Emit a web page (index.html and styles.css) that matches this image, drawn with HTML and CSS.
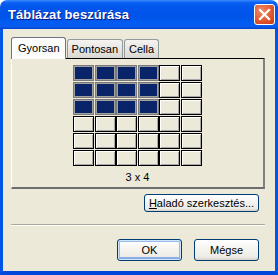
FILE: index.html
```html
<!DOCTYPE html>
<html>
<head>
<meta charset="utf-8">
<link rel="stylesheet" href="styles.css">
</head>
<body>
<div class="window">
  <div class="titlebar">
    <span class="title">Táblázat beszúrása</span>
    <button class="close" aria-label="Bezárás">
      <svg width="13" height="13" viewBox="0 0 13 13"><path d="M2 2 L11 11 M11 2 L2 11" stroke="#fff" stroke-width="2.2" stroke-linecap="square"/></svg>
    </button>
  </div>
  <div class="client">
    <div class="tabs">
      <div class="tab active">Gyorsan</div>
      <div class="tab">Pontosan</div>
      <div class="tab">Cella</div>
    </div>
    <div class="panel">
      <div class="grid">
        <div class="cell on"></div><div class="cell on"></div><div class="cell on"></div><div class="cell on"></div><div class="cell"></div><div class="cell"></div>
        <div class="cell on"></div><div class="cell on"></div><div class="cell on"></div><div class="cell on"></div><div class="cell"></div><div class="cell"></div>
        <div class="cell on"></div><div class="cell on"></div><div class="cell on"></div><div class="cell on"></div><div class="cell"></div><div class="cell"></div>
        <div class="cell"></div><div class="cell"></div><div class="cell"></div><div class="cell"></div><div class="cell"></div><div class="cell"></div>
        <div class="cell"></div><div class="cell"></div><div class="cell"></div><div class="cell"></div><div class="cell"></div><div class="cell"></div>
        <div class="cell"></div><div class="cell"></div><div class="cell"></div><div class="cell"></div><div class="cell"></div><div class="cell"></div>
      </div>
      <div class="size">3 x 4</div>
    </div>
    <div class="adv-row">
      <button class="btn adv"><u>H</u>aladó szerkesztés...</button>
    </div>
    <div class="sep"></div>
    <div class="actions">
      <button class="btn default">OK</button>
      <button class="btn">Mégse</button>
    </div>
  </div>
</div>
</body>
</html>
```
FILE: styles.css
```css
* { box-sizing: border-box; }
html, body { margin: 0; padding: 0; background: #fff; }
body { font-family: "Liberation Sans", Arial, sans-serif; font-size: 11px; color: #000; }

.window {
  width: 278px;
  height: 275px;
  display: flex;
  flex-direction: column;
}

.titlebar {
  height: 29px;
  flex: none;
  display: flex;
  align-items: center;
  justify-content: space-between;
  padding: 0 3px 1px 8px;
  border-radius: 7px 7px 0 0;
  background: linear-gradient(to bottom, #3A8CFF 0%, #0B61F2 9%, #0256EB 25%, #0054E8 55%, #015CF2 80%, #0A5AEA 92%, #0041CF 100%);
}
.title {
  color: #fff;
  font-family: "Liberation Sans", Arial, sans-serif;
  font-weight: bold;
  font-size: 13px;
  text-shadow: 1px 1px 0 #0A1883;
  letter-spacing: 0.1px;
  margin-top: 1px;
}
.close {
  width: 21px;
  height: 21px;
  padding: 0;
  margin: 0;
  border: 1px solid #fff;
  border-radius: 3px;
  background: radial-gradient(circle at 35% 30%, #F08A6A 0%, #E5633A 45%, #D0421A 85%, #C43A14 100%);
  display: flex;
  align-items: center;
  justify-content: center;
  margin-top: 1px;
}

.client {
  flex: 1;
  background: #ECE9D8;
  border-left: 3px solid #0055E5;
  border-right: 3px solid #0055E5;
  border-bottom: 4px solid #0047DA;
  padding: 8px 10px 0 8px;
  display: flex;
  flex-direction: column;
}

.tabs {
  display: flex;
  align-items: flex-end;
  height: 21px;
  position: relative;
  z-index: 1;
}
.tab {
  height: 19px;
  padding: 2px 4px 0 4px;
  border: 1px solid #919B9C;
  border-bottom: none;
  border-radius: 3px 3px 0 0;
  background: linear-gradient(to bottom, #F4F3F0 0%, #DAD8D2 100%);
  line-height: 15px;
  margin-right: 1px;
  white-space: nowrap;
}
.tab.active {
  height: 22px;
  margin-bottom: -1px;
  padding: 3px 5px 0 6px;
  background: #FCFCFA;
  border-color: #6F7580;
}

.panel {
  height: 131px;
  border: 1px solid #000;
  border-left-color: #fff;
  border-right: 2px solid #808080;
  border-bottom: 2px solid #6E6E6E;
  background: #ECE9D8;
  display: flex;
  flex-direction: column;
  align-items: center;
  padding-top: 6px;
}

.grid {
  display: grid;
  grid-template-columns: repeat(6, 21px);
  grid-auto-rows: 16px;
  column-gap: 0.6px;
  row-gap: 1px;
}
.cell {
  background: #ECE9D8;
  border: 1px solid #000;
  box-shadow: inset 1px 1px 0 #fff, inset -1px -1px 0 #A7A6AA;
}
.cell.on {
  background: #0A246A;
  border: 1px solid #7A7A7A;
  box-shadow: inset 0 0 0 1px #A0A0A0;
}
.size {
  margin-top: 5px;
  font-size: 11px;
  line-height: 13px;
}

.adv-row {
  display: flex;
  justify-content: flex-end;
  padding-top: 5px;
  padding-right: 6px;
}

.btn {
  font-family: "Liberation Sans", Arial, sans-serif;
  font-size: 11px;
  color: #000;
  height: 22px;
  padding: 0 4px;
  border: 1px solid #003C74;
  border-radius: 3px;
  background: linear-gradient(to bottom, #FFFFFF 0%, #F4F3EE 50%, #ECEBE6 85%, #D6D0C5 100%);
  margin: 0;
  white-space: nowrap;
}
.adv {
  width: 115px;
  height: 18px;
  line-height: 14px;
  padding: 0;
}
.default {
  box-shadow: inset 0 0 0 1px #CEE7FF, inset 0 -2px 0 1px #89ADE4, inset 0 0 0 2px #9DBBEA;
}

.sep {
  margin-top: 12px;
  height: 2px;
  border-top: 1px solid #ACA899;
  border-bottom: 1px solid #fff;
}

.actions {
  display: flex;
  justify-content: flex-end;
  gap: 12px;
  padding-top: 13px;
  padding-right: 6px;
}
.actions .btn { width: 65px; }
```
